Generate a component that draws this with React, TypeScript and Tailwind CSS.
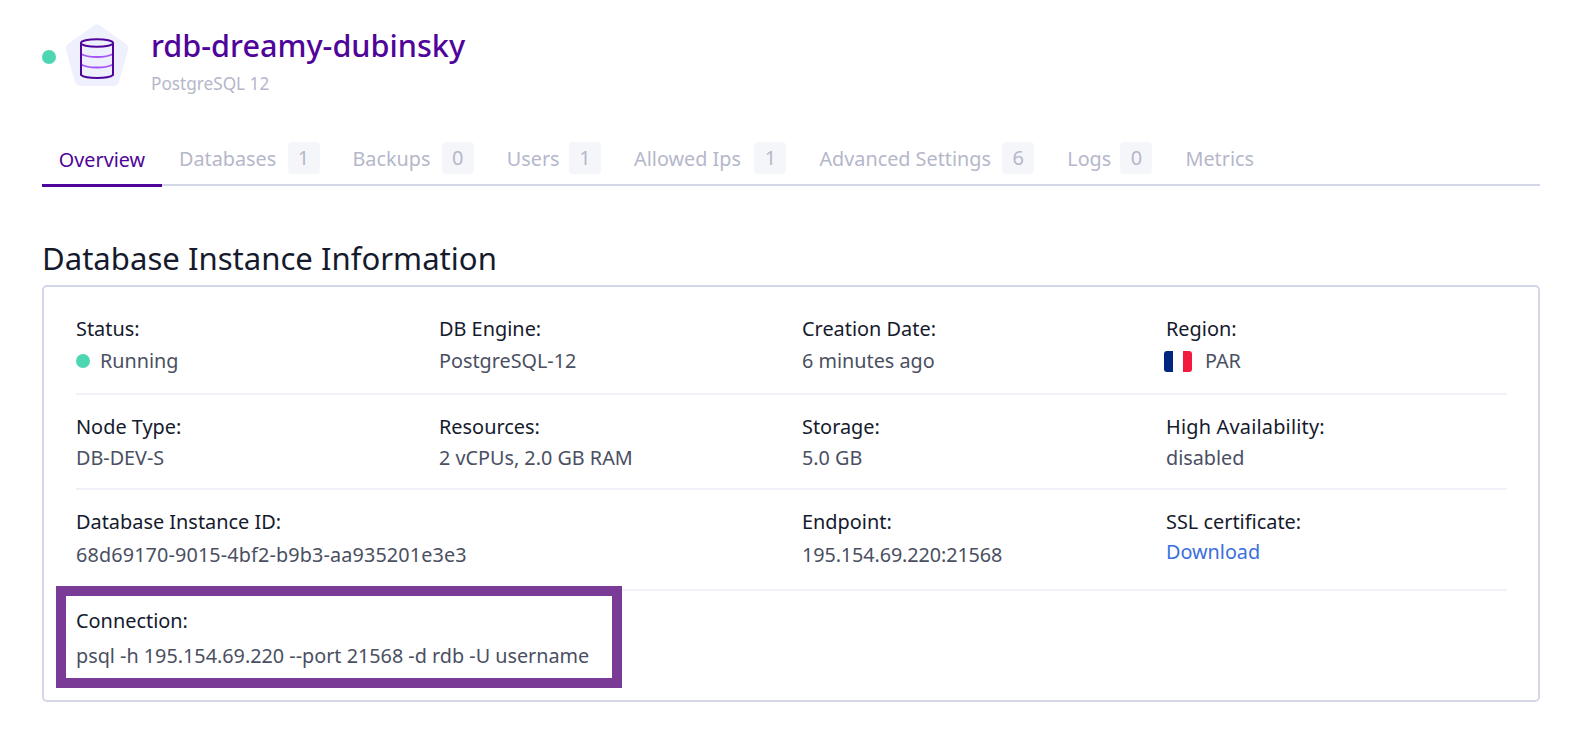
import React from "react";

function DbIcon() {
  return (
    <div className="relative w-[66px] h-[66px] shrink-0 ml-[8px] -mt-[3px]">
      <svg viewBox="-1 0 66 66" className="w-[66px] h-[66px]">
        <path d="M29 2.5 Q32 0.5 35 2.5 L61 21 Q64 23 63 27 L54 59 Q52 63 48 63 H16 Q12 63 10 59 L1 27 Q0 23 3 21 Z" fill="#eef0fd" />
        <path d="M16 31 C23 35 41 35 48 31 M16 41.5 C23 45.5 41 45.5 48 41.5" fill="none" stroke="#a855f7" strokeWidth="2" />
        <ellipse cx="32" cy="20" rx="16" ry="3.8" fill="none" stroke="#4f0599" strokeWidth="2" />
        <path d="M16 20 V52 C21 56 43 56 48 52 V20" fill="none" stroke="#4f0599" strokeWidth="2" />
      </svg>
    </div>
  );
}

function Tab({ label, count, labelClass }: { label: string; count?: number; labelClass: string }) {
  return (
    <div className="flex items-center h-[48px] mr-[33px]">
      <span className={`text-[19.8px] whitespace-nowrap pt-[2px] text-[#b5b7ca] ${labelClass}`}>{label}</span>
      {count !== undefined && (
        <span className="ml-[11px] flex items-center justify-center w-[32px] h-[32px] rounded-[4px] bg-[#f5f6fa] text-[20px] text-[#b5b7ca]">
          {count}
        </span>
      )}
    </div>
  );
}

function Field({
  label,
  children,
  className = "",
  valueClass = "mt-[3px]",
  labelClass = "",
}: {
  label: string;
  children: React.ReactNode;
  className?: string;
  valueClass?: string;
  labelClass?: string;
}) {
  return (
    <div className={className}>
      <div className={`text-[19.9px] leading-[28px] text-[#151a2d] ${labelClass}`}>{label}</div>
      <div className={`text-[19.8px] leading-[28px] text-[#4a4f62] flex items-center ${valueClass}`}>{children}</div>
    </div>
  );
}

function Flag() {
  return (
    <span className="flex w-[28px] h-[21px] rounded-[3px] overflow-hidden -ml-[2px] mr-[13px]">
      <span className="flex-1 bg-[#00267f]" />
      <span className="flex-1 bg-white" />
      <span className="flex-1 bg-[#f31b3d]" />
    </span>
  );
}

export default function App() {
  return (
    <div className="w-[1572px] h-[732px] bg-white pl-[42px] pr-[32px] overflow-hidden font-['Noto_Sans',sans-serif]">
      <div className="flex items-center pt-[24px] h-[90px]">
        <span className="w-[14px] h-[14px] rounded-full bg-[#4dd6b2] shrink-0" />
        <DbIcon />
        <div className="ml-[21px] self-start">
          <div className="text-[30.6px] leading-[42px] font-medium text-[#4f0599]">rdb-dreamy-dubinsky</div>
          <div className="text-[17.2px] leading-[24px] mt-[6px] text-[#b5b7ca]">PostgreSQL 12</div>
        </div>
      </div>

      <div className="flex mt-[44px] border-b-2 border-[#d4d7e8] h-[52px] items-start">
        <div className="flex items-center justify-center h-[53px] pt-[2px] w-[120px] mr-[17px] border-b-[3px] border-[#4f0599] text-[19.8px] text-[#4f0599] shrink-0">
          Overview
        </div>
        <Tab label="Databases" count={1} labelClass="w-[97.5px]" />
        <Tab label="Backups" count={0} labelClass="w-[78.3px]" />
        <Tab label="Users" count={1} labelClass="w-[51.3px]" />
        <Tab label="Allowed Ips" count={1} labelClass="w-[109.4px]" />
        <Tab label="Advanced Settings" count={6} labelClass="w-[171.8px]" />
        <Tab label="Logs" count={0} labelClass="w-[42.2px]" />
        <Tab label="Metrics" labelClass="w-[68px]" />
      </div>

      <h2 className="text-[31.1px] leading-[44px] mt-[50px] text-[#151a2d]">Database Instance Information</h2>

      <div className="mt-[5px] h-[417px] border-2 border-[#d4d7e8] rounded-[5px] pt-[28px] pl-[32px] pr-[31px]">
        <div className="grid grid-cols-[363px_363px_364px_1fr] h-[80px] border-b-2 border-[#f0f1fa]">
          <Field label="Status:" valueClass="mt-[4px]">
            <span className="w-[14px] h-[14px] rounded-full bg-[#4dd6b2] mr-[10px]" />
            Running
          </Field>
          <Field label="DB Engine:" valueClass="mt-[4px]">PostgreSQL-12</Field>
          <Field label="Creation Date:" valueClass="mt-[4px]">6 minutes ago</Field>
          <Field label="Region:" valueClass="mt-[4px]">
            <Flag />
            PAR
          </Field>
        </div>
        <div className="grid grid-cols-[363px_363px_364px_1fr] h-[95px] pt-[18px] border-b-2 border-[#f0f1fa]">
          <Field label="Node Type:">DB-DEV-S</Field>
          <Field label="Resources:">2 vCPUs, 2.0 GB RAM</Field>
          <Field label="Storage:">5.0 GB</Field>
          <Field label="High Availability:" labelClass="tracking-[0.2px]">disabled</Field>
        </div>
        <div className="grid grid-cols-[363px_363px_364px_1fr] h-[101px] pt-[18px] border-b-2 border-[#f0f1fa]">
          <Field label="Database Instance ID:" className="col-span-2" valueClass="mt-[5px] tracking-[0.14px]">
            68d69170-9015-4bf2-b9b3-aa935201e3e3
          </Field>
          <Field label="Endpoint:" valueClass="mt-[5px] tracking-[-0.1px]">195.154.69.220:21568</Field>
          <Field label="SSL certificate:" valueClass="mt-[2px]">
            <span className="text-[#3b6fdc]">Download</span>
          </Field>
        </div>
        <div className="relative pt-[16px]">
          <Field label="Connection:" valueClass="mt-[7px]">psql -h 195.154.69.220 --port 21568 -d rdb -U username</Field>
          <div className="absolute left-[-20px] top-[-5px] w-[566px] h-[102px] border-[10px] border-[#7a3b96]" />
        </div>
      </div>
    </div>
  );
}
